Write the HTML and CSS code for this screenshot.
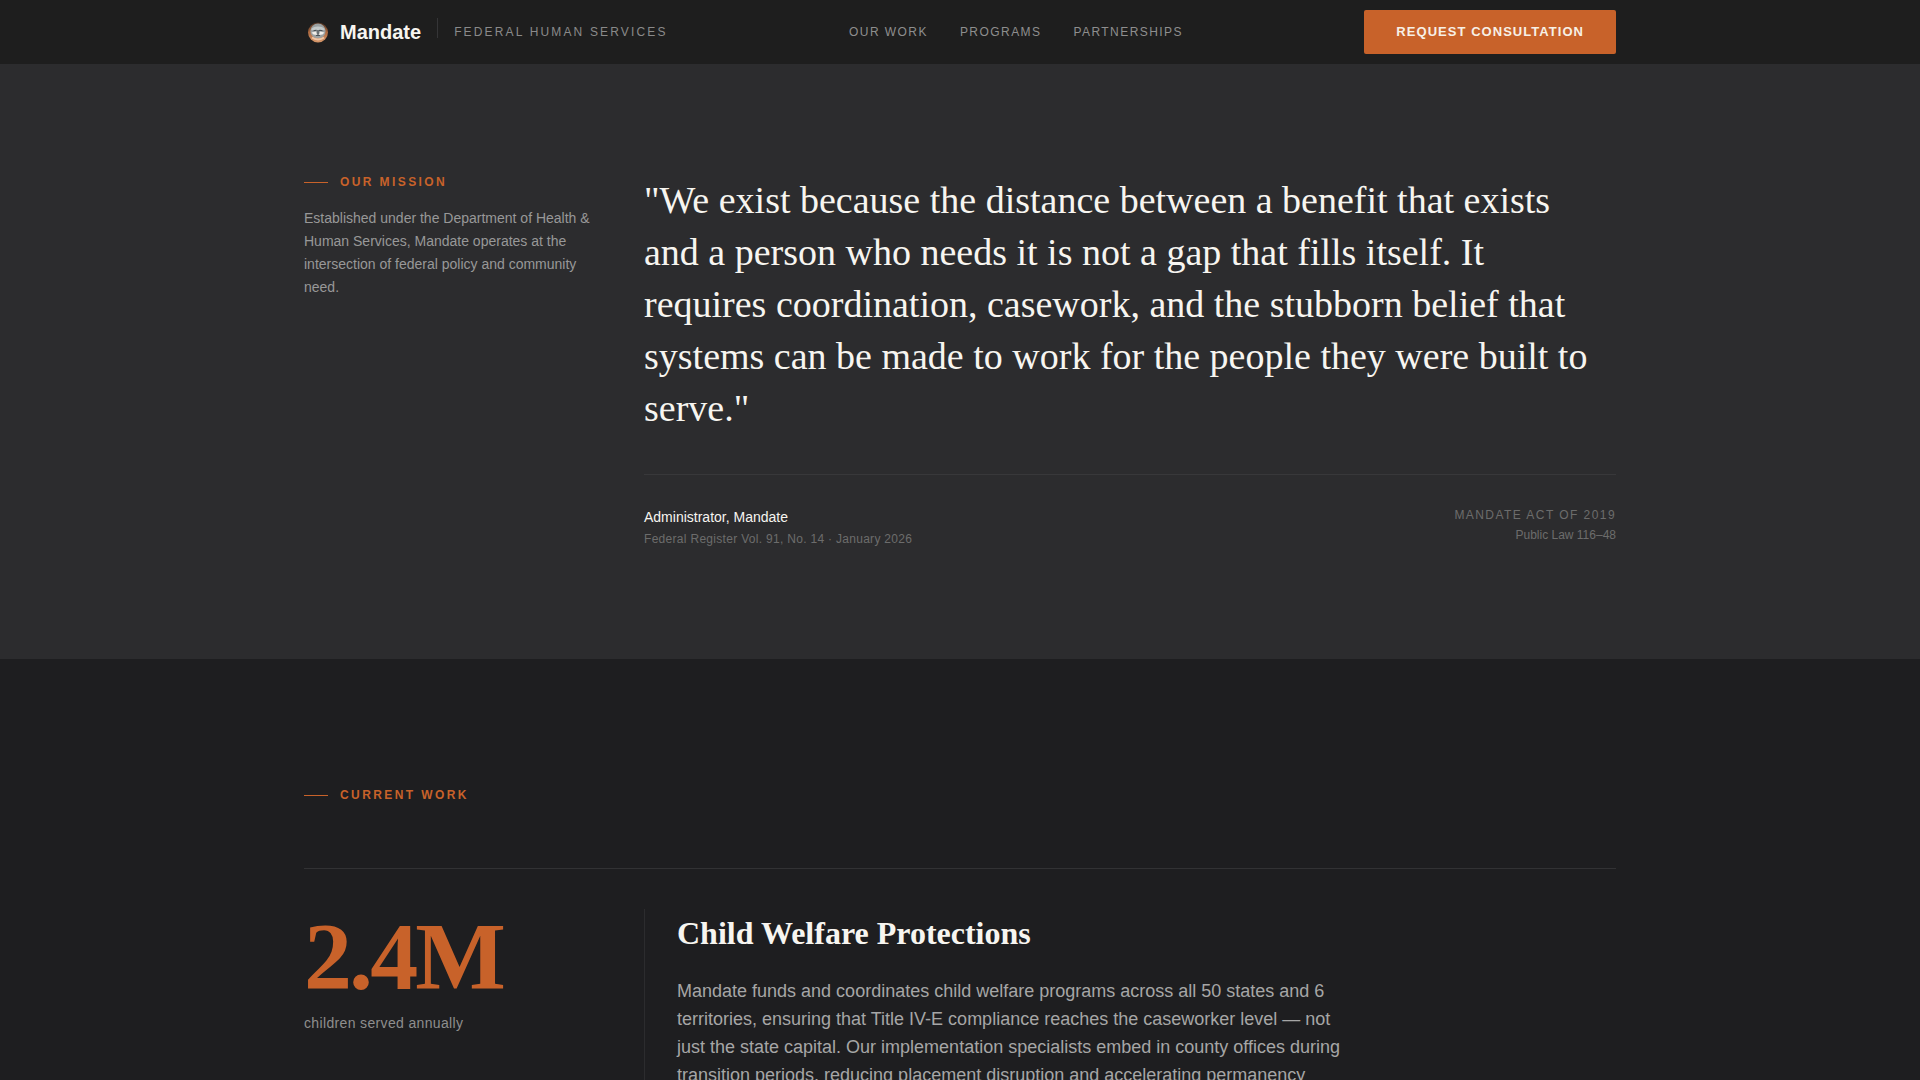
FILE: index.html
```
<!DOCTYPE html>
<html lang="en">
<head>
<meta charset="utf-8">
	<meta name="viewport" content="width=device-width, initial-scale=1">
	<title>Mandate - Federal Human Services</title>
	<link rel="stylesheet" href="styles.css">
</head>
<body>
	<header class="header">
		<div class="container headerRow">
			<div class="brand">
				<a class="logo" href="#">
					<svg class="seal" viewBox="0 0 28 28" aria-hidden="true">
						<defs>
							<linearGradient id="sealRing" x1="0" y1="0" x2="0" y2="1">
								<stop offset="0" stop-color="#4a3021"/>
								<stop offset="0.45" stop-color="#a8653c"/>
								<stop offset="1" stop-color="#d99a6c"/>
							</linearGradient>
						</defs>
						<circle cx="14" cy="14.5" r="10" fill="url(#sealRing)"/>
						<circle cx="14" cy="13" r="7.6" fill="#9aa0a1"/>
						<path d="M7 11.5C9 7.5 19 7.5 21 11.5L18.5 12.5 16 11.2 14 12.5 12 11.2 9.5 12.5Z" fill="#c3c9c9"/>
						<path d="M7.5 14.5L12 13.5 13 17 9.5 16.5ZM20.5 14.5L16 13.5 15 17 18.5 16.5Z" fill="#f1efea"/>
						<path d="M9.5 12.5H12.5M15 12.5H18.5M14 12V16.5M12 17.5H16" stroke="#4c5357" stroke-width="1.2" fill="none"/>
						<path d="M8 19.5C11 22 17 22 20 19.5" stroke="#efc6a5" stroke-width="2" fill="none"/>
					</svg>
					<span class="logoName">Mandate</span>
				</a>
				<span class="divider"></span>
				<span class="tagline">Federal Human Services</span>
			</div>
			<nav class="nav">
				<a href="#work">Our Work</a>
				<a href="#programs">Programs</a>
				<a href="#partnerships">Partnerships</a>
			</nav>
			<button class="btn" type="button">Request Consultation</button>
		</div>
	</header>

	<main>
		<section class="mission">
			<div class="container grid">
				<div class="side">
					<h2 class="label">Our Mission</h2>
					<p class="sideText">Established under the Department of Health &amp; Human Services, Mandate operates at the intersection of federal policy and community need.</p>
				</div>
				<div class="main">
					<blockquote class="quote">"We exist because the distance between a benefit that exists and a person who needs it is not a gap that fills itself. It requires coordination, casework, and the stubborn belief that systems can be made to work for the people they were built to serve."</blockquote>
					<div class="source">
						<div>
							<p class="sourceName">Administrator, Mandate</p>
							<p class="sourceRef">Federal Register Vol. 91, No. 14 · January 2026</p>
						</div>
						<div class="act">
							<p class="actName">Mandate Act of 2019</p>
							<p class="actLaw">Public Law 116–48</p>
						</div>
					</div>
				</div>
			</div>
		</section>

		<section class="work" id="work">
			<div class="container">
				<h2 class="label">Current Work</h2>
				<article class="grid workItem">
					<div class="side">
						<p class="number">2.4M</p>
						<p class="numberText">children served annually</p>
					</div>
					<div class="main workBody">
						<h3 class="workTitle">Child Welfare Protections</h3>
						<p class="workText">Mandate funds and coordinates child welfare programs across all 50 states and 6 territories, ensuring that Title IV-E compliance reaches the caseworker level — not just the state capital. Our implementation specialists embed in county offices during transition periods, reducing placement disruption and accelerating permanency</p>
					</div>
				</article>
			</div>
		</section>
	</main>
</body>
</html>
```
FILE: styles.css
```
*{
	box-sizing: border-box;
}
body{
	margin: 0px;
	background-color: #1e1e20;
	color: #f7f5f0;
	font-family: "Liberation Sans", Arial, sans-serif;
	font-size: 14px;
}
h2, h3, p, blockquote{
	margin: 0px;
}
a{
	color: inherit;
	text-decoration: none;
}
.container{
	max-width: 1440px;
	margin: 0px auto;
	padding: 0px 64px;
}
.grid{
	display: grid;
	grid-template-columns: repeat(12, 1fr);
	column-gap: 48px;
}
.side{
	grid-column: span 3;
}
.main{
	grid-column: span 9;
}

/* header */
.header{
	background-color: #1e1e1e;
}
.headerRow{
	display: flex;
	justify-content: space-between;
	align-items: center;
	height: 64px;
}
.brand{
	display: flex;
	align-items: center;
	gap: 16px;
}
.logo{
	display: flex;
	align-items: center;
	gap: 8px;
}
.seal{
	width: 28px;
	height: 28px;
}
.logoName{
	font-size: 20px;
	font-weight: bold;
}
.divider{
	width: 1px;
	height: 20px;
	margin-bottom: 8px;
	background-color: #353537;
}
.tagline{
	color: #8a8a8a;
	font-size: 12px;
	letter-spacing: 0.18em;
	text-transform: uppercase;
}
.nav{
	display: flex;
	gap: 32px;
	color: #8e8e8e;
	font-size: 12px;
	letter-spacing: 0.12em;
	text-transform: uppercase;
}
.btn{
	padding: 14px 32px;
	border: none;
	border-radius: 2px;
	background-color: #c8622a;
	color: #f7f0e6;
	font-family: inherit;
	font-size: 13px;
	font-weight: bold;
	line-height: 16px;
	letter-spacing: 0.08em;
	text-transform: uppercase;
	cursor: pointer;
}

/* mission */
.mission{
	padding: 110px 0px;
	background-color: #2c2c2e;
}
.label{
	display: flex;
	align-items: center;
	gap: 12px;
	color: #c8622a;
	font-size: 12px;
	line-height: 17px;
	letter-spacing: 0.2em;
	text-transform: uppercase;
}
.label::before{
	content: "";
	width: 24px;
	height: 1px;
	background-color: #c8622a;
}
.sideText{
	margin-top: 16px;
	color: #989898;
	line-height: 23px;
}
.quote{
	max-width: 960px;
	font-family: "Liberation Serif", "Times New Roman", serif;
	font-size: 38px;
	line-height: 52px;
}
.source{
	display: flex;
	justify-content: space-between;
	margin-top: 40px;
	padding-top: 32px;
	border-top: 1px solid #38383a;
}
.sourceName{
	line-height: 20px;
}
.sourceRef{
	margin-top: 2px;
	color: #6c6c6c;
	font-size: 12px;
	line-height: 20px;
	letter-spacing: 0.025em;
}
.act{
	color: #6c6c6c;
	font-size: 12px;
	line-height: 16px;
	text-align: right;
}
.actName{
	letter-spacing: 0.12em;
	text-transform: uppercase;
}
.actLaw{
	margin-top: 4px;
}

/* current work */
.work{
	padding: 128px 0px;
}
.workItem{
	margin-top: 64px;
	padding-top: 40px;
	border-top: 1px solid #323234;
}
.number{
	color: #c8622a;
	font-family: "Liberation Serif", "Times New Roman", serif;
	font-size: 96px;
	font-weight: bold;
	line-height: 96px;
	letter-spacing: -0.03em;
}
.numberText{
	margin-top: 8px;
	color: #8e8e8e;
	line-height: 20px;
	letter-spacing: 0.025em;
}
.workBody{
	padding-left: 32px;
	border-left: 1px solid #2c2c2e;
}
.workTitle{
	font-family: "Liberation Serif", "Times New Roman", serif;
	font-size: 32px;
	line-height: 48px;
}
.workText{
	max-width: 680px;
	margin-top: 20px;
	color: #a6a6a6;
	font-size: 18px;
	line-height: 28px;
}
```
